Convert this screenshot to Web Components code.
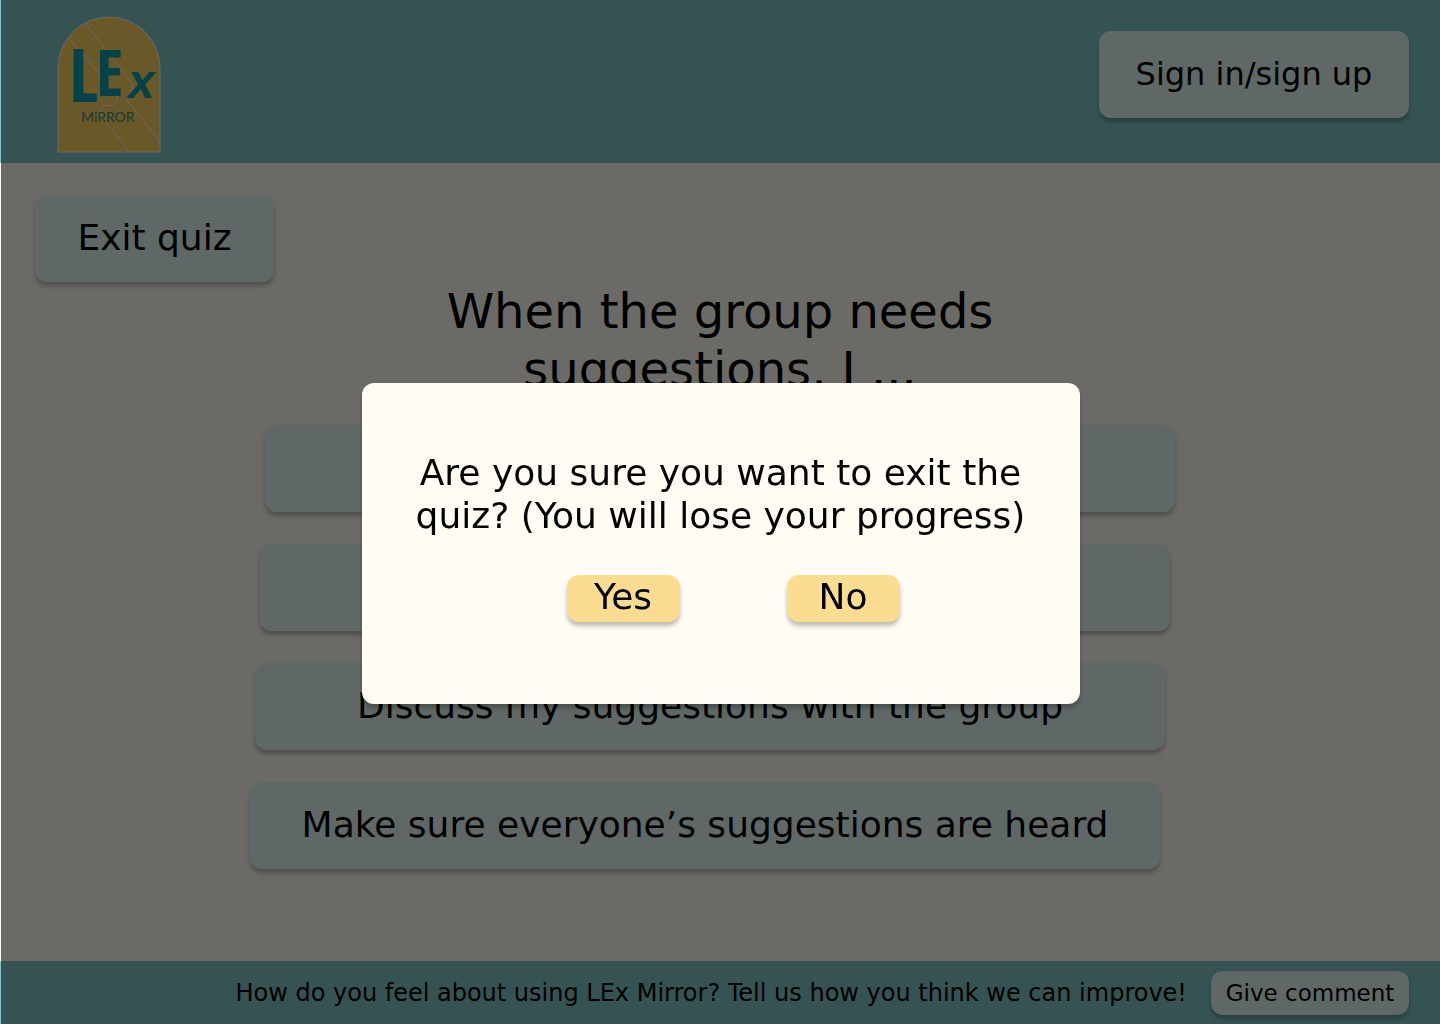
<!DOCTYPE html>
<html lang="en">
<head>
<meta charset="utf-8">
<meta name="viewport" content="width=device-width, initial-scale=1">
<title>LEx Mirror quiz</title>
<style>
  body {
    margin: 0;
    font-family: "DejaVu Sans", sans-serif;
    color: #000;
    --teal: #81c6c8;
    --cream: #fffcf4;
    --mist: #e3f8f3;
    --honey: #fcdc90;
    --drop: 0 4px 4px rgba(0, 0, 0, .25);
    --radius: 12px;
  }
</style>
</head>
<body>
<quiz-app></quiz-app>
<script>
class View extends HTMLElement {
  constructor() {
    super();
    this.attachShadow({ mode: "open" }).innerHTML = this.constructor.markup;
  }
}

customElements.define("lex-logo", class extends View {
  static markup = `
    <style>
      :host { display: block; width: 104px; height: 138px; }
      a { display: block; }
      svg { display: block; }
      text { font-family: "Liberation Sans Narrow", "Open Sans Condensed", "Liberation Sans", sans-serif; }
      .big { fill: #0a9db0; font-weight: 700; }
      .wide { font-family: "Liberation Sans", sans-serif; font-style: italic; }
      .small { fill: #3e8a85; font-family: Lato, sans-serif; }
    </style>
    <a href="#" aria-label="LEx Mirror home">
      <svg width="104" height="138" viewBox="0 0 104 138">
        <g stroke="#fff6ff" stroke-width="1" fill="none">
          <path fill="#fcd25f" d="M1 136V52A51 51 0 0 1 103 52V136Z"/>
          <path d="M28 7L65 54C75 67 79 72 72 78C69 81 70 84 73 88L103 126"/>
          <path d="M11 21L48 64M57 75C62 81 62 88 53 89.500C43 88 42 95 45 101L58 117L72 136"/>
        </g>
        <text class="big" x="12" y="86" font-size="73">L</text>
        <text class="big" x="39" y="80" font-size="64">E</text>
        <text class="big wide" x="71" y="82" font-size="48">x</text>
        <text class="small" x="24" y="106" font-size="14">MiRROR</text>
      </svg>
    </a>`;
});

customElements.define("soft-button", class extends View {
  static observedAttributes = ["label"];
  static markup = `
    <style>
      :host { display: block; }
      button {
        display: block; width: 100%; height: 100%; box-sizing: border-box; margin: 0; border: 0; padding: var(--pad, 0 0 2px);
        border-radius: var(--radius); box-shadow: var(--drop);
        background: var(--fill, var(--mist)); color: inherit;
        font: inherit; text-align: center; cursor: pointer;
      }
    </style>
    <button type="button"><slot></slot></button>`;
  attributeChangedCallback(name, old, value) {
    this.shadowRoot.querySelector("button").setAttribute("aria-label", value);
  }
});

customElements.define("site-header", class extends View {
  static markup = `
    <style>
      :host {
        display: flex; justify-content: space-between; align-items: flex-start;
        box-sizing: border-box; height: 163px; padding: 16px 31px 0 57px; background: var(--teal);
      }
      soft-button { width: 310px; height: 87px; margin-top: 15px; font-size: 32px; }
    </style>
    <lex-logo></lex-logo>
    <soft-button>Sign in/sign up</soft-button>`;
});

customElements.define("quiz-question", class extends View {
  static markup = `
    <style>
      :host { display: flex; flex-direction: column; align-items: center; padding: 32px 35px; }
      .exit { align-self: flex-start; width: 239px; height: 87px; font-size: 36px; }
      h1 { max-width: 640px; margin: 0 0 27px; font-size: 48px; font-weight: 400; line-height: 58px; text-align: center; }
      .answers { display: flex; flex-direction: column; align-items: center; gap: 32px; width: 100%; }
      .answers soft-button {
        width: 100%; max-width: 910px; height: 87px; font-size: 36px;
        margin-right: calc(var(--step) * 10px);
      }
    </style>
    <soft-button class="exit">Exit quiz</soft-button>
    <h1>When the group needs suggestions, I ...</h1>
    <div class="answers">
      <soft-button style="--step: 0" label="First answer"></soft-button>
      <soft-button style="--step: 1" label="Second answer"></soft-button>
      <soft-button style="--step: 2">Discuss my suggestions with the group</soft-button>
      <soft-button style="--step: 3">Make sure everyone’s suggestions are heard</soft-button>
    </div>`;
});

customElements.define("site-footer", class extends View {
  static markup = `
    <style>
      :host {
        display: flex; justify-content: flex-end; align-items: center; gap: 24px;
        box-sizing: border-box; height: 63px; padding: 0 31px; background: var(--teal); font-size: 24px;
      }
      p { margin: 0; }
      soft-button { width: 198px; height: 44px; flex: none; font-size: 23px; --pad: 0; }
    </style>
    <p>How do you feel about using LEx Mirror? Tell us how you think we can improve!</p>
    <soft-button>Give comment</soft-button>`;
});

customElements.define("exit-dialog", class extends View {
  static markup = `
    <style>
      :host {
        position: fixed; inset: 0 0 0 1px; display: flex; justify-content: center; align-items: center;
        box-sizing: border-box; padding-top: 63px; background: rgba(0, 0, 0, .58);
      }
      section {
        box-sizing: border-box; width: 718px; padding: 68px 40px 82px;
        border-radius: var(--radius); background: var(--cream); box-shadow: var(--drop);
        font-size: 36px; line-height: 43px; text-align: center;
      }
      p { margin: 0 0 38px; }
      .choices { display: flex; justify-content: center; gap: 107px; padding-left: 25px; }
      soft-button { width: 113px; height: 47px; --fill: var(--honey); --pad: 0 0 4px; }
    </style>
    <section role="dialog" aria-modal="true" aria-labelledby="ask">
      <p id="ask">Are you sure you want to exit the quiz? (You will lose your progress)</p>
      <div class="choices">
        <soft-button>Yes</soft-button>
        <soft-button>No</soft-button>
      </div>
    </section>`;
});

customElements.define("quiz-app", class extends View {
  static markup = `
    <style>
      :host { display: flex; flex-direction: column; min-height: 100vh; background: var(--cream); }
      main { flex: 1; }
    </style>
    <site-header></site-header>
    <main><quiz-question></quiz-question></main>
    <site-footer></site-footer>
    <exit-dialog></exit-dialog>`;
});
</script>
</body>
</html>
